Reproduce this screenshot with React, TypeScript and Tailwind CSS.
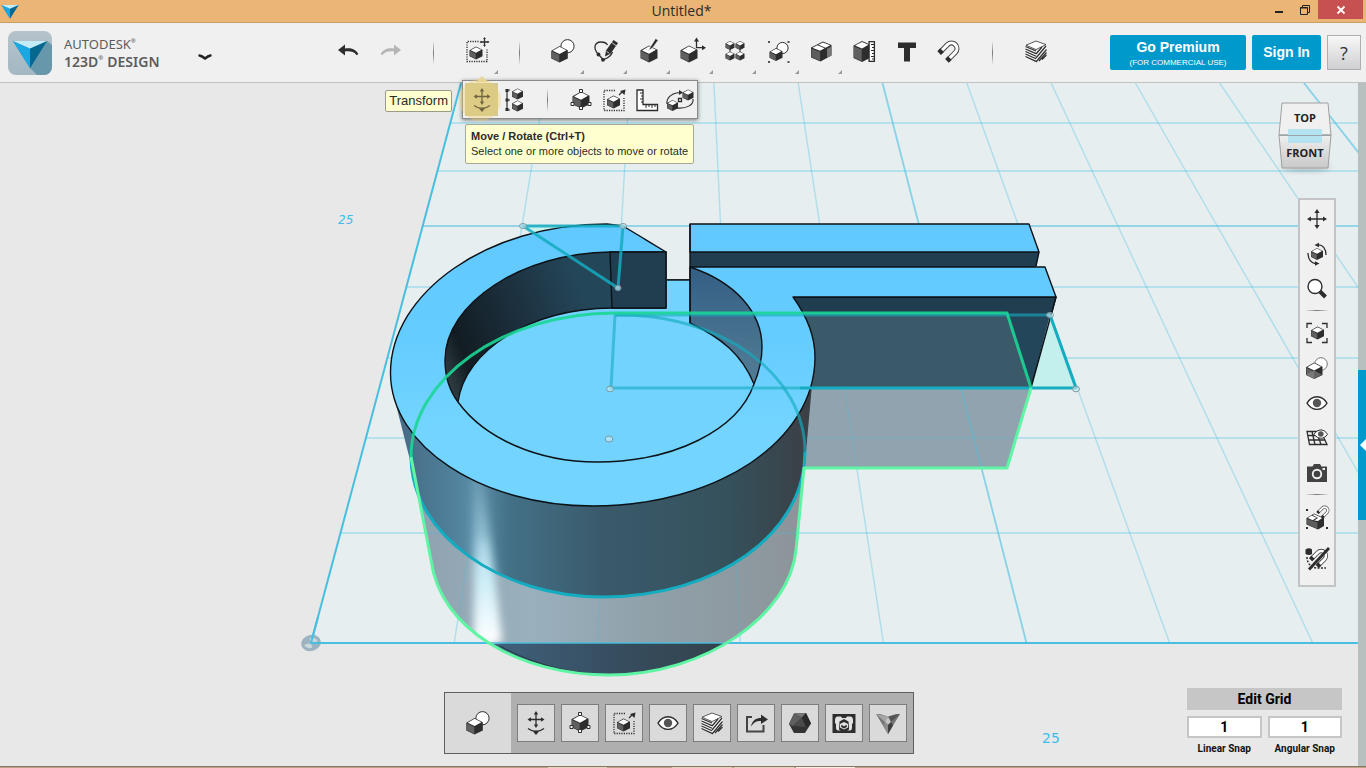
import type { ReactNode } from 'react'

const INK = '#2d2d2d'

type IconProps = { children: ReactNode }

const Icon = ({ children }: IconProps) => (
  <svg
    viewBox="0 0 24 24"
    className="h-6 w-6 overflow-visible"
    fill="none"
    stroke={INK}
    strokeWidth="1.3"
    aria-hidden="true"
  >
    {children}
  </svg>
)

const Cube = ({ x, y, s }: { x: number; y: number; s: number }) => (
  <g transform={`translate(${x} ${y}) scale(${s / 16})`} stroke="none">
    <path d="M8 0 16 4 16 12 8 16 0 12 0 4.5Z" fill={INK} />
    <path d="M8 .8 14.6 4.1 8 7.8 1.4 4.6Z" fill="#fff" />
    <path d="M.4 5.2 7.7 8.8V15.4L.4 11.8Z" fill="#606060" />
  </g>
)

const Arrows = ({ x, y, r }: { x: number; y: number; r: number }) => (
  <g transform={`translate(${x} ${y}) scale(${r / 10})`}>
    <path d="M-8 0H8M0-8V8" strokeWidth={13 / r} />
    <path
      d="M-10 0-6-2.6V2.6ZM10 0 6-2.6V2.6ZM0-10-2.6-6H2.6ZM0 10-2.6 6H2.6Z"
      fill={INK}
      stroke="none"
    />
  </g>
)

const Magnet = ({ x, y, s }: { x: number; y: number; s: number }) => (
  <g transform={`translate(${x} ${y}) scale(${s / 24}) rotate(45 12 12)`}>
    <path d="M6 21V9a6 6 0 0 1 12 0V21" strokeWidth="5.6" stroke="#4a4a4a" />
    <path d="M6 18V9a6 6 0 0 1 12 0V18" strokeWidth="3.4" stroke="#fff" />
    <path d="M3.2 17.5H8.8V22H3.2ZM15.2 17.5H20.8V22H15.2Z" fill={INK} stroke="none" />
  </g>
)

const UndoIcon = () => (
  <Icon>
    <path d="M2 11 9 5.5V9.5C15 8.5 20 10.5 22.4 15L20.6 16.2C18 12.6 14 12 9 12.5V16.5Z" fill={INK} stroke="none" />
  </Icon>
)

const RedoIcon = () => (
  <Icon>
    <path d="M22 11 15 5.5V9.5C9 8.5 4 10.5 1.6 15L3.4 16.2C6 12.6 10 12 15 12.5V16.5Z" fill="#b5b5b5" stroke="none" />
  </Icon>
)

const TransformIcon = () => (
  <Icon>
    <path d="M13.5 2.5H2V22.5H22V9.5" strokeDasharray="1.2 1.2" />
    <Cube x={4.5} y={7.5} s={13} />
    <Arrows x={19.5} y={3} r={5} />
  </Icon>
)

const PrimitivesIcon = () => (
  <Icon>
    <circle cx="16.5" cy="7.2" r="6.6" fill="#fff" strokeWidth="1" />
    <Cube x={0.3} y={7} s={16.5} />
  </Icon>
)

const SketchIcon = () => (
  <Icon>
    <path d="M4.5 15.5C-1 10 0 3 7 3C10 3 12.5 4 13.5 6M4.5 15.5C6 17 7 18 9 20.5C14 19.5 17 17 18.5 13" />
    <circle cx="4.5" cy="15.5" r="1.9" fill={INK} stroke="none" />
    <circle cx="9" cy="20.8" r="1.9" fill={INK} stroke="none" />
    <path d="M12 11.5 19.5 1 24 4 16.5 14.8 11 17.5Z" fill={INK} stroke="none" />
    <path d="M17.5 3.3 22.2 6.8M12.4 12.3 15.3 14.3" stroke="#f0f0f0" strokeWidth=".8" />
  </Icon>
)

const ConstructIcon = () => (
  <Icon>
    <Cube x={3.5} y={6.5} s={17} />
    <path d="M11.5 11.5 13.6 7.5 18.6-.5 21.2 1.2 15.6 9Z" fill={INK} stroke="#f0f0f0" strokeWidth=".7" />
  </Icon>
)

const ModifyIcon = () => (
  <Icon>
    <Cube x={0.5} y={6.5} s={17} />
    <path d="M16.5 8.7V1.5M16 8.7H23" />
    <path d="M16.5-1.5 19 2.5H14ZM26 8.7 22 6.2V11.2Z" fill={INK} stroke="none" />
  </Icon>
)

const PatternIcon = () => (
  <Icon>
    <path d="M7 9V14M17 9V14" strokeWidth="1" />
    <Cube x={2.5} y={2} s={9} />
    <Cube x={12.5} y={2} s={9} />
    <Cube x={2.5} y={12.5} s={9} />
    <Cube x={12.5} y={12.5} s={9} />
  </Icon>
)

const GroupingIcon = () => (
  <Icon>
    <path d="M2 2H4V4H2ZM21.5 2H23.5V4H21.5ZM2 22H4V24H2ZM21.5 22H23.5V24H21.5Z" fill="#555" stroke="none" />
    <circle cx="16.5" cy="9" r="5.6" fill="#fff" strokeWidth="1" />
    <Cube x={3.5} y={9} s={13} />
  </Icon>
)

const CombineIcon = () => (
  <Icon>
    <path d="M2 8.5 14 2.5 22.5 6V16.5L11.5 22.5 2 18.5Z" fill={INK} stroke="none" />
    <path d="M3.4 8.7 8.4 6.2 15.6 9.2 11 11.7ZM9.4 5.7 14 3.4 21.2 6.3 16.6 8.7Z" fill="#fff" stroke="none" />
    <path d="M2.4 9.6 11.1 13V21.8L2.4 18.1Z" fill="#5d5d5d" stroke="none" />
    <path d="M18 9.8 22.5 7.4V16.3L18 18.8Z" fill="#777" stroke="none" />
  </Icon>
)

const MeasureIcon = () => (
  <Icon>
    <path d="M1.5 6.5 10 2 18 5.5V19L10 23 1.5 19Z" fill={INK} stroke="none" />
    <path d="M3 6.6 10 3 16.5 5.8 10 9.6Z" fill="#fff" stroke="none" />
    <path d="M1.9 7.4 9.7 10.6V22.3L1.9 18.6Z" fill="#606060" stroke="none" />
    <path d="M17.1 2.6H22.4V22.4H17.1Z" fill="#fff" />
    <path d="M19 5.5H22M20 8.5H22M19 11.5H22M20 14.5H22M19 17.5H22M20 20H22" strokeWidth="1" />
  </Icon>
)

const LetterIcon = () => (
  <Icon>
    <path d="M3 3.5H21V9H15V22.5H9V9H3Z" fill={INK} stroke="none" />
  </Icon>
)

const SnapIcon = () => (
  <Icon>
    <Magnet x={0.5} y={0.5} s={22} />
  </Icon>
)

const MaterialIcon = () => (
  <Icon>
    <path d="M12 1.5 22.5 5.5V17L12 23 1.5 18.5V6Z" fill="#f4f4f4" stroke="none" />
    <path d="M12 2 22 5.6 12 10.6 2 6.2Z" fill="#fff" strokeWidth=".8" />
    <path d="M1.5 7.5 12 12M1.5 10 12 14.6M1.5 12.5 12 17.2M1.5 15 12 19.8M1.5 17.5 12 22.4" strokeWidth="1.2" />
    <path d="M12 15 18 8M12 19 22 7M12 23 22.5 10.5M15 22 22.5 13.5M18 20.5 22.5 16" strokeWidth="1.2" />
  </Icon>
)

const MoveRotateIcon = () => (
  <Icon>
    <Arrows x={12} y={8.5} r={8.5} />
    <path d="M4 17.5Q12 23.5 20 17.5" />
    <path d="M9 20.5 12 19.5 15 20.5 12 24Z" fill={INK} stroke="none" />
  </Icon>
)

const AlignIcon = () => (
  <Icon>
    <path d="M4 2V22M4 2H7M4 12H7M4 22H7" strokeWidth="1.2" />
    <path d="M2.5 1H5.5V4H2.5ZM2.5 10.5H5.5V13.5H2.5ZM2.5 20H5.5V23H2.5Z" fill={INK} stroke="none" />
    <Cube x={9} y={0.5} s={11} />
    <Cube x={9} y={12.5} s={11} />
  </Icon>
)

const SmartScaleIcon = () => (
  <Icon>
    <Cube x={3.5} y={3.5} s={17} />
    <path d="M10.5 1.5H13.5V4.5H10.5ZM2 14.5H5V17.5H2ZM19 14.5H22V17.5H19ZM10.5 18.5H13.5V21.5H10.5Z" fill="#fff" strokeWidth="1" />
  </Icon>
)

const ScaleIcon = () => (
  <Icon>
    <path d="M13 2.5H2V22.5H22V10" strokeDasharray="1.2 1.2" />
    <Cube x={5} y={7.5} s={13} />
    <path d="M17 7 20 4" />
    <path d="M23.5 1.5 22.5 7 18 3Z" fill={INK} stroke="none" />
  </Icon>
)

const RulerIcon = () => (
  <Icon>
    <path d="M2 2H8V16.5H22.5V22.5H2Z" fill="#fff" />
    <path d="M8 5H5M8 8H6M8 11H5M8 14H6M11 17V20M14 17V19M17 17V20M20 17V19" strokeWidth="1" />
  </Icon>
)

const SnapFacesIcon = () => (
  <Icon>
    <path d="M-1 16C-2 9 5 4.5 13 4.5M25 11C26 17 18 21 9 20" strokeWidth="1.1" />
    <path d="M11 2 15 4.5 11 7Z" fill={INK} stroke="none" />
    <path d="M10.5 10.5H13.5V13.5H10.5Z" fill="#fff" />
    <Cube x={-1} y={12} s={11} />
    <Cube x={14.5} y={1.5} s={11} />
  </Icon>
)

const PanIcon = () => (
  <Icon>
    <Arrows x={12} y={12} r={10} />
  </Icon>
)

const OrbitIcon = () => (
  <Icon>
    <Cube x={6} y={6} s={12} />
    <path d="M12 3C18 2 21 7 21 13M12 21.5C6 22 3 17 3 11" />
    <path d="M9.5 3 14 .8V5.2ZM14.5 21.5 10 19.3V23.7Z" fill={INK} stroke="none" />
  </Icon>
)

const ZoomIcon = () => (
  <Icon>
    <circle cx="10" cy="9.5" r="7" fill="#fff" strokeWidth="1.4" />
    <path d="M15 14.5 20.5 20" strokeWidth="4" />
  </Icon>
)

const FitIcon = () => (
  <Icon>
    <path d="M2 7V2.5H7M17 2.5H22V7M22 17V21.5H17M7 21.5H2V17" />
    <Cube x={6} y={5.5} s={13} />
  </Icon>
)

const ShadingIcon = () => (
  <Icon>
    <circle cx="16" cy="8" r="6.3" fill="#fff" stroke="#777" strokeWidth="1" />
    <Cube x={1} y={6.5} s={16.5} />
    <path d="M1 18.5 9 14.5 17 18.5 9 23Z" fill="#8a8a8a" stroke="none" opacity=".6" />
  </Icon>
)

const EyeIcon = () => (
  <Icon>
    <path d="M2 12.2C7 3.6 17 3.6 22 12.2C17 20.5 7 20.5 2 12.2Z" fill="#fff" />
    <circle cx="12" cy="12" r="4.2" fill="#555" stroke="none" />
  </Icon>
)

const GridEyeIcon = () => (
  <Icon>
    <path d="M2 5.5H16L22 18.5H4.5ZM3 9.5H19M3.7 14H20M7 5.5 10 18.5M11.5 5.5 16 18.5" />
    <path d="M9 8.3C13 2.5 19 2.5 22.5 8.3C19 13.5 13 13.5 9 8.3Z" fill="#fff" strokeWidth="1" />
    <circle cx="15.8" cy="8" r="2.8" fill="#555" stroke="none" />
  </Icon>
)

const CameraIcon = () => (
  <Icon>
    <path d="M2 5.5H7.5L9 3H15L16.5 5.5H22V21H2Z" fill="#424242" stroke="none" />
    <circle cx="12" cy="13" r="5.2" fill="#f0f0f0" stroke="none" />
    <circle cx="12" cy="13" r="3.3" fill="#424242" stroke="none" />
    <path d="M17.5 7H20V9H17.5Z" fill="#f0f0f0" stroke="none" />
  </Icon>
)

const GroupSnapIcon = () => (
  <Icon>
    <path d="M1 2H3V4H1ZM1 20H3V22H1ZM21 20H23V22H21Z" fill={INK} stroke="none" />
    <path d="M1.5 11 9 6.5 19 11V19L13 22.5 1.5 17.5Z" fill={INK} stroke="none" />
    <path d="M2.8 11 6.5 8.6 11.5 10.8 7.6 13.2ZM7.6 8 9.2 7.2 17.2 10.9 13 14 9.2 13.5 13 11Z" fill="#fff" stroke="none" />
    <path d="M1.8 12 12.4 15.4V21.8L1.8 17.2Z" fill="#5d5d5d" stroke="none" />
    <Magnet x={12} y={-2} s={13} />
  </Icon>
)

const SnapOffIcon = () => (
  <Icon>
    <path d="M.5 2.5Q4 0 7 2.5V7Q4 9 .5 7Z" fill={INK} stroke="none" />
    <path d="M2 10C2 17 7 21 12 21H21" strokeDasharray="2 1.4" strokeWidth="1.5" />
    <Magnet x={5} y={1} s={19} />
    <path d="M24 1 4 22.5" strokeWidth="2.8" />
  </Icon>
)

const ShareIcon = () => (
  <Icon>
    <path d="M8 6H3V20.5H19.5V14" stroke="#444" strokeWidth="2" />
    <path d="M7 15.5C8 9.5 12 7 17 7V3.5L24 8.5 17 13V10C13 9.5 10 11 7 15.5Z" fill={INK} stroke="none" />
  </Icon>
)

const PolyhedronIcon = () => (
  <Icon>
    <g stroke="none">
      <path d="M6 2.5 18 2 23 12.5 17 22H6L1 13Z" fill="#333" />
      <path d="M6 2.5 18 2 14 6.5Z" fill="#777" />
      <path d="M6 2.5 14 6.5 4.5 15 1 13Z" fill="#606060" />
      <path d="M14 6.5 18 16 4.5 15Z" fill="#4a4a4a" />
      <path d="M14 6.5 18 2 23 12.5 18 16Z" fill="#2a2a2a" />
    </g>
  </Icon>
)

const PrinterIcon = () => (
  <Icon>
    <g stroke="none">
      <path d="M.5 3H23.5V22H.5Z" fill={INK} />
      <path
        d="M6 5.5H9L10 7H14L15 5.5H18C20 5.5 21 7 21 9V12L20 13V17C20 18.5 19 19.5 18 19.5H6C5 19.5 4 18.5 4 17V13L3 12V9C3 7 4 5.5 6 5.5Z"
        fill="#e2e2e2"
      />
      <path d="M12 8 16.5 10.5 17 18.5 15 20H9L7 18.5 7.5 10.5Z" fill={INK} />
      <path d="M12 11 16 13V16.5L12 18.5 8 16.5V13Z" fill="#e2e2e2" />
      <path d="M9.2 13.8 12 15.2 14.8 13.8V16L12 17.4 9.2 16Z" fill={INK} />
    </g>
  </Icon>
)

const MeshIcon = () => (
  <Icon>
    <g stroke="none">
      <path d="M0 3H24L12 23Z" fill="#777" />
      <path d="M0 3 12 5.5 9 11Z" fill="#a5a5a5" />
      <path d="M24 3 12 5.5 15 11Z" fill="#555" />
      <path d="M9 11 12 5.5 15 11 12 14Z" fill="#c4c4c4" />
      <path d="M12 14 15 11 17 14.5 12 23Z" fill="#3f3f3f" />
      <path d="M12 14 9 11 7 14.5 12 23Z" fill="#8c8c8c" />
      <path d="M4 3H20L12 5.5Z" fill="#dcdcdc" />
    </g>
  </Icon>
)

const BrandMark = () => (
  <g>
    <path d="M5 10H39L22 37Z" fill="#0a79a8" />
    <path d="M5 10 22 17.5V37Z" fill="#1ba7e2" />
    <path d="M39 10 22 17.5V37Z" fill="#07688f" />
    <path d="M5 10H39L22 17.5Z" fill="#c4ebf8" />
  </g>
)

const TitleBar = () => (
  <header className="grid h-[23px] shrink-0 grid-cols-[1fr_auto_1fr] items-center border-b border-[#c9a063] bg-[#ebb576] pr-[3px]">
    <svg viewBox="4 8 36 30" className="ml-px h-[15px] w-[18px]" aria-hidden="true">
      <BrandMark />
    </svg>
    <h1 className="font-['Open_Sans',sans-serif] text-[14px] leading-[22px] text-[#2b2b2b]">Untitled*</h1>
    <div className="flex h-full items-start justify-end">
      <button aria-label="Minimize" className="flex h-[19px] w-[26px] items-center justify-center">
        <svg viewBox="0 0 12 12" className="h-3 w-3" aria-hidden="true">
          <path d="M2 7H10V9H2Z" fill="#222" />
        </svg>
      </button>
      <button aria-label="Restore" className="flex h-[19px] w-[26px] items-center justify-center">
        <svg viewBox="0 0 12 12" className="h-3 w-3" fill="none" stroke="#222" aria-hidden="true">
          <path d="M1.5 3.5H8.5V10.5H1.5ZM1 4H9M3.5 3.5V1.5H10.5V8.5H8.5" />
        </svg>
      </button>
      <button aria-label="Close" className="flex h-[19px] w-[45px] items-center justify-center bg-[#c75050]">
        <svg viewBox="0 0 12 12" className="h-3 w-3" stroke="#fff" strokeWidth="1.8" aria-hidden="true">
          <path d="M2.5 2.5 9.5 9.5M9.5 2.5 2.5 9.5" />
        </svg>
      </button>
    </div>
  </header>
)

const Separator = () => (
  <div className="flex w-[43px] justify-center">
    <div className="h-6 w-px bg-linear-to-b from-transparent via-[#777] to-transparent" />
  </div>
)

type ToolProps = { label: string; icon: ReactNode; hasMenu?: boolean; children?: ReactNode }

const Tool = ({ label, icon, hasMenu, children }: ToolProps) => (
  <div className="relative flex h-full w-[43px] items-center justify-center pb-1">
    <button aria-label={label}>{icon}</button>
    {hasMenu && (
      <svg viewBox="0 0 4 4" className="absolute right-0 bottom-2 h-1 w-1" aria-hidden="true">
        <path d="M4 0V4H0Z" fill="#999" />
      </svg>
    )}
    {children}
  </div>
)

const transformItems = [
  { label: 'Align', icon: <AlignIcon /> },
  null,
  { label: 'Smart Scale', icon: <SmartScaleIcon /> },
  { label: 'Scale', icon: <ScaleIcon /> },
  { label: 'Smart Rotate', icon: <RulerIcon /> },
  { label: 'Snap Faces', icon: <SnapFacesIcon /> },
]

const TransformMenu = () => (
  <div className="absolute top-[57px] left-[7px] z-20 w-[236px]">
    <svg viewBox="0 0 12 6" className="absolute -top-1 left-3.5 h-1.5 w-3" aria-hidden="true">
      <path d="M0 6 6 0 12 6Z" fill="#e3d7a5" />
    </svg>
    <div className="flex h-[39px] items-center border border-[#8a8a8a] bg-[#f0f0f0] shadow-[0_1px_4px_rgba(0,0,0,0.5)]">
      <button
        aria-label="Move / Rotate"
        className="relative ml-0.5 flex h-[33px] flex-1 items-center justify-center bg-[#d2c897]"
      >
        <span className="absolute -top-1 -left-1.5 h-[42px] w-[42px] rounded-full bg-[#f0d060]/35" />
        <MoveRotateIcon />
      </button>
      {transformItems.map((item) =>
        item ? (
          <button key={item.label} aria-label={item.label} className="flex flex-1 items-center justify-center">
            {item.icon}
          </button>
        ) : (
          <div key="separator" className="flex flex-1 justify-center">
            <div className="h-6 w-px bg-linear-to-b from-transparent via-[#777] to-transparent" />
          </div>
        ),
      )}
    </div>
    <div className="absolute top-[10px] right-full mr-[10px] rounded-xs border border-[#9b9b8a] bg-[#ffffcf] px-[3px] text-[13px] leading-5 text-[#2b2b2b]">
      Transform
    </div>
    <div className="absolute top-11 left-[3px] rounded-xs border border-[#a9a998] bg-[#ffffcf] px-[5px] py-1 text-[11px] leading-[15px] whitespace-nowrap text-[#2b2b2b]">
      <p className="font-bold">Move / Rotate (Ctrl+T)</p>
      <p>Select one or more objects to move or rotate</p>
    </div>
  </div>
)

const Toolbar = () => (
  <nav className="z-10 flex h-[60px] shrink-0 items-center border-b border-[#c2c2c2] bg-[#f0f0f0] pr-[5px]">
    <div className="flex w-[326px] shrink-0 items-center pl-2">
      <svg viewBox="0 0 44 44" className="h-11 w-11" aria-hidden="true">
        <defs>
          <linearGradient id="badge" x1="0" y1="0" x2="0" y2="1">
            <stop offset="0" stopColor="#b5c3ca" />
            <stop offset="1" stopColor="#a3b8c3" />
          </linearGradient>
        </defs>
        <rect width="44" height="44" rx="8" fill="url(#badge)" />
        <path d="M39 10 44 14V36A8 8 0 0 1 36 44H29L22 37Z" fill="#6797ab" />
        <BrandMark />
      </svg>
      <div className="ml-3 flex flex-col font-['Noto_Sans',sans-serif] text-[14px] leading-[17px] text-[#5c5c5c]">
        <p className="flex items-start text-[13px]">
          AUTODESK<span className="text-[6px] leading-[10px]">®</span>
        </p>
        <p className="flex items-start font-semibold">
          123D<span className="mr-1 text-[6px] leading-[10px]">®</span>DESIGN
        </p>
      </div>
      <button aria-label="Application menu" className="mt-2 mr-[114px] ml-auto">
        <svg viewBox="0 0 14 8" className="h-2 w-3.5" fill="none" stroke="#222" strokeWidth="2.4" aria-hidden="true">
          <path d="M1.5 2.5Q4 3 7 5.5Q10 3 12.5 2.5" strokeLinecap="round" />
        </svg>
      </button>
    </div>

    <div className="flex h-full shrink-0 items-center">
      <Tool label="Undo" icon={<UndoIcon />} />
      <Tool label="Redo" icon={<RedoIcon />} />
      <Separator />
      <Tool label="Transform" icon={<TransformIcon />} hasMenu>
        <TransformMenu />
      </Tool>
      <Separator />
      <Tool label="Primitives" icon={<PrimitivesIcon />} hasMenu />
      <Tool label="Sketch" icon={<SketchIcon />} hasMenu />
      <Tool label="Construct" icon={<ConstructIcon />} hasMenu />
      <Tool label="Modify" icon={<ModifyIcon />} hasMenu />
      <Tool label="Pattern" icon={<PatternIcon />} hasMenu />
      <Tool label="Grouping" icon={<GroupingIcon />} hasMenu />
      <Tool label="Combine" icon={<CombineIcon />} hasMenu />
      <Tool label="Measure" icon={<MeasureIcon />} />
      <Tool label="Text" icon={<LetterIcon />} />
      <Tool label="Snap" icon={<SnapIcon />} />
      <Separator />
      <Tool label="Material" icon={<MaterialIcon />} />
    </div>

    <div className="ml-auto flex shrink-0 gap-1.5">
      <button className="flex h-[35px] w-[136px] flex-col items-center justify-center rounded-xs bg-[#0099cc] pt-px text-white">
        <span className="text-[14px] leading-[18px] font-bold">Go Premium</span>
        <span className="text-[8px] leading-[13px]">(FOR COMMERCIAL USE)</span>
      </button>
      <button className="h-[35px] w-[69px] rounded-xs bg-[#0099cc] text-[14px] font-bold text-white">Sign In</button>
      <button
        aria-label="Help"
        className="h-[35px] w-[34px] border border-[#aeaeae] bg-linear-to-b from-[#f8f8f8] to-[#cfcfd2] font-['Open_Sans',sans-serif] text-[18px] leading-none font-medium text-[#333]"
      >
        ?
      </button>
    </div>
  </nav>
)

// The work plane is seen in perspective: line spacing grows linearly towards the viewer.
const TOP_Y = 83
const BASE_Y = 643
const GRID_ROWS = [123, 171, 226, 287, 358, 438, 533]
const GRID_COLUMNS = [1, 2, 3, 4, 5, 6, 7, 8, 9, 10]
const leftEdge = (y: number) => 461 - ((y - TOP_Y) * 150) / 560

const GridLines = () => (
  <g fill="none" stroke="#48bfe0">
    {GRID_ROWS.map((y) => (
      <path
        key={y}
        d={`M${leftEdge(y)} ${y}H1366`}
        strokeWidth={y === 226 ? 1.6 : 1.4}
        opacity={y === 226 ? 0.7 : 0.4}
      />
    ))}
    {GRID_COLUMNS.map((k) => (
      <path
        key={k}
        d={`M${461 + 84.3 * k} ${TOP_Y}L${311 + 143.1 * k} ${BASE_Y}`}
        strokeWidth={k % 5 === 0 ? 1.8 : 1.4}
        opacity={k % 5 === 0 ? 0.6 : 0.35}
      />
    ))}
    <path d="M461 83 311 643H1366" strokeWidth="2" />
  </g>
)

const OUTER_RIM =
  'M623 226 607 224C487 224 390.5 293 390.5 373C390.5 446 481 506 593 506C717 506 815 441 815 357C815 335 806 315 793 297'
const LOWER_BODY =
  'M411 457 431 560C440 630 520 675 609 675C705 675 790 615 796 550L805 452C805 534 716 597 603 597C500 597 411 534 411 457Z'
const UPPER_WALL = 'M391 385 411 464C416 538 500 597 603 597C716 597 805 534 806 452L812 385Z'

const Scene = () => (
  <svg
    viewBox="0 83 1358 683"
    preserveAspectRatio="xMinYMin slice"
    className="absolute inset-0 h-full w-full"
    role="img"
    aria-label="3D model of a split ring with a handle"
  >
    <defs>
      <linearGradient id="top" x1="0" y1="224" x2="0" y2="506" gradientUnits="userSpaceOnUse">
        <stop offset="0" stopColor="#61c9ff" />
        <stop offset=".4" stopColor="#65ccff" />
        <stop offset=".7" stopColor="#72d4ff" />
      </linearGradient>
      <linearGradient id="wall" x1="391" y1="0" x2="812" y2="0" gradientUnits="userSpaceOnUse">
        <stop offset="0" stopColor="#456883" />
        <stop offset=".14" stopColor="#4f7f99" />
        <stop offset=".2" stopColor="#5b8ea8" />
        <stop offset=".28" stopColor="#437187" />
        <stop offset=".5" stopColor="#3a5a6b" />
        <stop offset=".8" stopColor="#35515c" />
        <stop offset="1" stopColor="#3b3f44" />
      </linearGradient>
      <linearGradient id="ghost" x1="411" y1="0" x2="805" y2="0" gradientUnits="userSpaceOnUse">
        <stop offset="0" stopColor="#8fa1ae" />
        <stop offset=".3" stopColor="#99b0bd" />
        <stop offset=".6" stopColor="#90a1aa" />
        <stop offset="1" stopColor="#8c949a" />
      </linearGradient>
      <linearGradient id="foot" x1="490" y1="0" x2="720" y2="0" gradientUnits="userSpaceOnUse">
        <stop offset="0" stopColor="#40617c" />
        <stop offset=".5" stopColor="#374f62" />
        <stop offset="1" stopColor="#33434c" />
      </linearGradient>
      <linearGradient id="hole" x1="445" y1="400" x2="600" y2="340" gradientUnits="userSpaceOnUse">
        <stop offset="0" stopColor="#3a4a50" />
        <stop offset=".2" stopColor="#121c22" />
        <stop offset=".6" stopColor="#1c303e" />
        <stop offset="1" stopColor="#244659" />
      </linearGradient>
      <linearGradient id="inside" x1="0" y1="267" x2="0" y2="384" gradientUnits="userSpaceOnUse">
        <stop offset="0" stopColor="#345f84" />
        <stop offset="1" stopColor="#537d95" />
      </linearGradient>
      <linearGradient id="shine" x1="0" y1="460" x2="0" y2="643" gradientUnits="userSpaceOnUse">
        <stop offset="0" stopColor="#b9e4f5" stopOpacity="0" />
        <stop offset=".6" stopColor="#c9effb" stopOpacity=".8" />
        <stop offset="1" stopColor="#fff" />
      </linearGradient>
      <filter id="soften" x="-100%" y="-10%" width="300%" height="120%">
        <feGaussianBlur stdDeviation="5" />
      </filter>
      <clipPath id="body">
        <path d={UPPER_WALL} />
        <path d={LOWER_BODY} />
      </clipPath>
      <clipPath id="below">
        <path d="M300 643H900V700H300Z" />
      </clipPath>
      <clipPath id="see-through">
        <path d={LOWER_BODY} />
        <path d="M811 388H1031L1007 468H804Z" />
      </clipPath>
    </defs>

    <rect y="83" width="1358" height="683" fill="#e8e8e8" />
    <path d="M461 83H1366V643H311Z" fill="#e6eef0" />
    <GridLines />
    <g fontFamily="DejaVu Sans, sans-serif" fill="#3fbde8">
      <text x="338" y="224" fontSize="12" fontStyle="italic">25</text>
      <text x="1042" y="743" fontSize="14">25</text>
    </g>

    {/* handle */}
    <path d="M805 388H1031L1007 468H803Z" fill="#90a3ae" />
    <path d="M690 224H1029L1039 252 1036 267H690Z" fill="#213e51" />
    <g stroke="#0c1216" strokeWidth="1.4" strokeLinejoin="round">
      <path d="M690 224H1029L1039 252H690Z" fill="url(#top)" />
      <path d="M1039 252 1036 266" />
      <path d="M793 297H1056L1031 388H806Z" fill="#23465a" />
    </g>
    <path d="M780 313H1007L1031 388H780Z" fill="#3a5a6a" />
    <path d="M780 298H1055L1051 313H780Z" fill="#213e51" />
    <path d="M1050 315 1076 388H1031Z" fill="#c3efed" />
    <path d="M1056 297 1031 388" stroke="#0c1216" strokeWidth="1.4" />
    <path d="M523 226H623L560 228 540 234Z" fill="#c9f1ee" />

    {/* ring */}
    <path d={UPPER_WALL} fill="url(#wall)" />
    <path d={LOWER_BODY} fill="url(#ghost)" />
    <g clipPath="url(#below)">
      <path d={LOWER_BODY} fill="url(#foot)" />
    </g>
    <g clipPath="url(#body)">
      <path d="M474 460H482L502 643H474Z" fill="url(#shine)" filter="url(#soften)" />
      <path d="M480 540H486L496 643H480Z" fill="url(#shine)" filter="url(#soften)" />
      <path d="M480 644H720V680H480Z" fill="url(#foot)" />
    </g>
    <g clipPath="url(#see-through)" opacity=".7">
      <GridLines />
    </g>
    <g stroke="#0c1216" strokeWidth="1.4" strokeLinejoin="round">
      <path d={`${OUTER_RIM}H1056L1045 267H690V280H666V252Z`} fill="url(#top)" stroke="none" />
      <path d={`${OUTER_RIM}H1056L1045 267H690M623 226 666 252M667 280H690`} fill="none" />
      <path
        d="M610 252C522 253 445 303 445 360C445 416 513 462 597 462C688 462 762 410 762 347C762 312 735 282 690 267V280H666V252Z"
        fill="#72d3ff"
        stroke="none"
      />
      <path d="M667 280H690" />
      <path d="M458 402C465 350 530 309 612 308H666V252H610C522 253 445 303 445 360C445 377 449 390 458 402Z" fill="url(#hole)" />
      <path d="M610 252H666V308H612Z" fill="#213e51" />
      <path d="M690 267C735 282 762 312 762 347C762 360 759 372 754 384C742 355 722 338 690 323Z" fill="url(#inside)" />
      <path d="M458 402C484 438 537 462 597 462C674 462 738 430 754 384M690 224V323" fill="none" />
      <path d="M500 646C570 684 650 684 718 646" fill="none" strokeWidth="1" stroke="#23353f" />
    </g>

    {/* sketch profiles */}
    <g fill="none" stroke="#14acc0" strokeWidth="3" strokeLinejoin="round">
      <path d="M615 315C722 313 805 375 805 452" opacity=".65" />
      <path d="M805 452C805 534 716 597 603 597C500 597 411 534 411 457" />
      <path d="M523 226H623L618 288Z" strokeOpacity=".85" />
      <path d="M1050 315H615L611 388H800" opacity=".6" />
      <path d="M800 388H1076L1050 315" />
    </g>
    <g fill="none" strokeWidth="3" strokeLinejoin="round">
      <path d="M411 457C411 379 503 313 615 313H1007L1031 388" stroke="#1bd695" opacity=".9" />
      <path d="M411 457 431 560C440 630 520 675 609 675C705 675 790 615 796 550L804 468H1007L1031 388" stroke="#5ff5a4" />
    </g>
    <g fill="#cdeef5" fillOpacity=".6" stroke="#7c99a3" strokeWidth="1">
      <ellipse cx="523" cy="226" rx="3.5" ry="2.5" />
      <ellipse cx="623" cy="226" rx="3.5" ry="2.5" />
      <ellipse cx="618" cy="288" rx="3" ry="2.5" />
      <ellipse cx="610" cy="389" rx="3.5" ry="2.8" />
      <ellipse cx="609" cy="439" rx="3.8" ry="3" />
      <ellipse cx="1050" cy="315" rx="3.5" ry="2.5" />
      <ellipse cx="1076" cy="389" rx="3.5" ry="2.8" />
    </g>

    {/* origin marker */}
    <g transform="rotate(-15 311 643)">
      <ellipse cx="311" cy="643" rx="8.5" ry="6.5" fill="#cbd7de" stroke="#9cb3c1" strokeWidth="3" />
      <path d="M311 643V636.5A8 6.5 0 0 0 303 643ZM311 643V649.5A8 6.5 0 0 0 319 643Z" fill="#9cb3c1" />
    </g>
    <path d="M318 617 311 643H340" fill="none" stroke="#48bfe0" strokeWidth="2" />
  </svg>
)

const ViewCube = () => (
  <button aria-label="View cube" className="absolute top-4 right-[22px]">
    <svg viewBox="0 0 62 76" className="h-[76px] w-[62px]" aria-hidden="true">
      <defs>
        <linearGradient id="cube-front" x1="0" y1="0" x2="0" y2="1">
          <stop offset="0" stopColor="#efefef" />
          <stop offset="1" stopColor="#c9c9c9" />
        </linearGradient>
        <filter id="cube-shadow" x="-30%" y="-100%" width="160%" height="300%">
          <feGaussianBlur stdDeviation="3" />
        </filter>
      </defs>
      <ellipse cx="32" cy="68" rx="24" ry="4" fill="#000" opacity=".2" filter="url(#cube-shadow)" />
      <g stroke="#a0a0a0" strokeLinejoin="round">
        <path d="M8 4H54L57 36H5Z" fill="#f0f0f0" />
        <path d="M5 36H57L54 69H8Z" fill="url(#cube-front)" />
      </g>
      <rect x="14" y="30" width="34" height="14" fill="#b5e2ef" />
      <path d="M5 36.5H57" stroke="#9aa5aa" />
      <g fontFamily="Open Sans, sans-serif" fontWeight="700" fontSize="11" fill="#222" textAnchor="middle">
        <text x="31" y="23">TOP</text>
        <text x="31" y="58">FRONT</text>
      </g>
    </svg>
  </button>
)

const viewTools = [
  [
    { label: 'Pan', icon: <PanIcon /> },
    { label: 'Orbit', icon: <OrbitIcon /> },
    { label: 'Zoom', icon: <ZoomIcon /> },
  ],
  [
    { label: 'Fit', icon: <FitIcon /> },
    { label: 'Shading', icon: <ShadingIcon /> },
    { label: 'Visibility', icon: <EyeIcon /> },
    { label: 'Grid visibility', icon: <GridEyeIcon /> },
    { label: 'Screenshot', icon: <CameraIcon /> },
  ],
]

const snapTools = [
  { label: 'Group snap', icon: <GroupSnapIcon /> },
  { label: 'Snap off', icon: <SnapOffIcon /> },
]

const ViewBar = () => (
  <div className="absolute top-[115px] right-[22px] flex w-[38px] flex-col border-2 border-[#c4c4c7] bg-[#f0f0f0] pt-px pb-1.5">
    {viewTools.map((group) => (
      <div key={group[0].label} className="flex flex-col items-center">
        {group.map((tool) => (
          <button key={tool.label} aria-label={tool.label} className="flex h-[35px] items-center">
            {tool.icon}
          </button>
        ))}
        <div className="my-1 h-px w-6 bg-linear-to-r from-transparent via-[#777] to-transparent" />
      </div>
    ))}
    {snapTools.map((tool) => (
      <button key={tool.label} aria-label={tool.label} className="flex h-10 items-center justify-center">
        {tool.icon}
      </button>
    ))}
  </div>
)

const quickTools = [
  { label: 'Move / Rotate', icon: <MoveRotateIcon /> },
  { label: 'Smart Scale', icon: <SmartScaleIcon /> },
  { label: 'Scale', icon: <ScaleIcon /> },
  { label: 'Hide', icon: <EyeIcon /> },
  { label: 'Material', icon: <MaterialIcon /> },
  { label: 'Export', icon: <ShareIcon /> },
  { label: 'Send to Meshmixer', icon: <PolyhedronIcon /> },
  { label: '3D Print', icon: <PrinterIcon /> },
  { label: 'Send to 123D', icon: <MeshIcon /> },
]

const QuickBar = () => (
  <div className="absolute inset-x-0 bottom-3 mx-auto flex h-[62px] w-fit border border-[#5f5f5f] bg-[#afafaf]">
    <button aria-label="Solids" className="flex w-[66px] items-center justify-center bg-[#dadada]">
      <PrimitivesIcon />
    </button>
    <div className="flex items-center gap-1.5 px-1.5">
      {quickTools.map((tool) => (
        <button
          key={tool.label}
          aria-label={tool.label}
          className="flex h-[38px] w-[38px] items-center justify-center border border-[#7d7d7d] bg-[#dadada]"
        >
          {tool.icon}
        </button>
      ))}
    </div>
  </div>
)

const SnapField = ({ id, label }: { id: string; label: string }) => (
  <div className="flex flex-1 flex-col items-center">
    <input
      id={id}
      defaultValue="1"
      className="h-[22px] w-full border-2 border-[#c6c6c6] bg-white text-center text-[14px] font-bold text-black outline-none"
    />
    <label htmlFor={id} className="mt-1 text-[10px] leading-[14px] font-bold text-[#111]">
      {label}
    </label>
  </div>
)

const GridSettings = () => (
  <form className="absolute right-4 bottom-[10px] w-[155px] font-['Roboto',sans-serif]">
    <button type="button" className="h-[22px] w-full bg-[#c6c6c6] text-[14px] leading-[22px] font-bold text-black">
      Edit Grid
    </button>
    <div className="mt-[5px] flex gap-1.5">
      <SnapField id="linear-snap" label="Linear Snap" />
      <SnapField id="angular-snap" label="Angular Snap" />
    </div>
  </form>
)

const App = () => (
  <div className="flex h-screen flex-col overflow-hidden bg-[#e8e8e8] font-['Liberation_Sans',Arial,sans-serif]">
    <TitleBar />
    <Toolbar />
    <div className="flex min-h-0 flex-1">
      <main className="relative flex-1 overflow-hidden">
        <Scene />
        <ViewCube />
        <ViewBar />
        <QuickBar />
        <GridSettings />
      </main>
      <aside className="w-2 shrink-0 bg-[#b7bfbf] pt-[287px]">
        <button aria-label="Open parts library" className="flex h-[150px] w-2 items-center justify-end bg-[#0099cc]">
          <svg viewBox="0 0 6 12" className="h-3 w-1.5" aria-hidden="true">
            <path d="M6 0V12L0 6Z" fill="#fff" />
          </svg>
        </button>
      </aside>
    </div>
    <footer className="flex h-0.5 shrink-0 justify-center gap-0.5 border-t border-[#8b7660] bg-[#b8a189] pr-5 pl-14">
      <div className="mr-[63px] h-px w-[59px] bg-[#e4d3bf]" />
      <div className="h-px w-[60px] bg-[#e4d3bf]" />
      <div className="h-px w-[60px] bg-[#e4d3bf]" />
      <div className="h-px w-[59px] bg-[#f7f0e8]" />
    </footer>
  </div>
)

export default App
